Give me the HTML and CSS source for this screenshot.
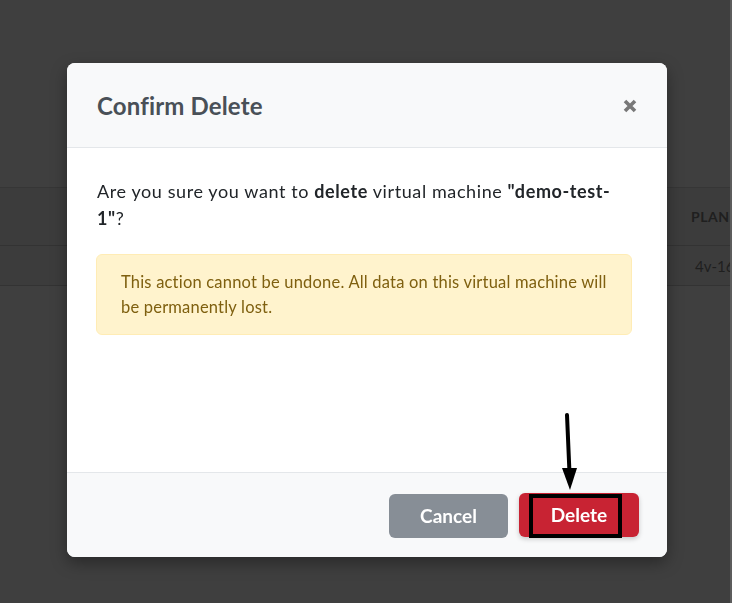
FILE: index.html
```html
<!DOCTYPE html>
<html>
<head>
<meta charset="utf-8">
<link rel="stylesheet" href="styles.css">
</head>
<body>
<div class="page">
  <div class="top-space"></div>
  <div class="row head-row"><div class="spacer"></div><div class="cell th">PLAN</div></div>
  <div class="row data-row"><div class="spacer"></div><div class="cell td">4v-16</div></div>
</div>
<div class="scroll-edge"></div>

<div class="overlay">
  <div class="modal">
    <div class="modal-header">
      <h2 class="modal-title">Confirm Delete</h2>
      <svg class="close" width="14" height="14" viewBox="0 0 14 14" aria-label="Close">
        <path d="M2 2 L12 12 M12 2 L2 12" stroke="#787878" stroke-width="3.6" stroke-linecap="butt"/>
      </svg>
    </div>
    <div class="modal-body">
      <p class="question">Are you sure you want to <b>delete</b> virtual machine <b>"demo-test-<wbr>1"</b>?</p>
      <div class="alert">This action cannot be undone. All data on this virtual machine will be permanently lost.</div>
    </div>
    <div class="modal-footer">
      <button class="btn btn-cancel">Cancel</button>
      <button class="btn btn-delete">Delete<span class="mark"></span></button>
    </div>
  </div>
  <svg class="arrow" width="30" height="80" viewBox="0 0 30 80">
    <line x1="12" y1="2" x2="14.5" y2="60" stroke="#000" stroke-width="4" stroke-linecap="round"/>
    <polygon points="7,55 22,55 15,77" fill="#000"/>
  </svg>
</div>
</body>
</html>
```

FILE: styles.css
```css
html, body {
  margin: 0;
  padding: 0;
  width: 732px;
  height: 603px;
  overflow: hidden;
  background: #3f3f3f;
  font-family: "Lato", "Noto Sans", sans-serif;
}

.page {
  display: flex;
  flex-direction: column;
}

.top-space {
  height: 187px;
  border-bottom: 1px solid #363636;
}

.row {
  display: flex;
  align-items: center;
  background: #3c3c3c;
  border-bottom: 1px solid #333;
}

.head-row { height: 57px; }
.data-row { height: 39px; }

.spacer { width: 691px; flex: none; }

.cell {
  white-space: nowrap;
  color: #1f1f1f;
}

.th {
  font-weight: 700;
  font-size: 14px;
  letter-spacing: 0.5px;
}

.td {
  font-size: 15px;
  padding-left: 4px;
}

.scroll-edge {
  position: fixed;
  top: 0;
  right: 0;
  width: 2px;
  height: 603px;
  background: #5c5c5c;
}

.overlay {
  position: fixed;
  inset: 0;
  display: flex;
  justify-content: center;
  align-items: flex-start;
  padding: 63px 0 0 2px;
}

.modal {
  width: 600px;
  height: 494px;
  background: #fff;
  border-radius: 8px;
  display: flex;
  flex-direction: column;
  overflow: hidden;
  box-shadow: 0 6px 16px rgba(0,0,0,0.35);
}

.modal-header {
  height: 84px;
  background: #f8f9fa;
  border-bottom: 1px solid #e4e7ea;
  display: flex;
  align-items: center;
  justify-content: space-between;
  padding: 0 30px 0 30px;
  flex: none;
}

.modal-title {
  margin: 0;
  font-size: 24px;
  font-weight: 700;
  letter-spacing: 0.15px;
  color: #495057;
}

.close {
  display: block;
  margin-top: 2px;
}

.modal-body {
  flex: 1;
  padding: 30px 35px 0 30px;
}

.question {
  margin: 0 0 22px 0;
  padding-right: 14px;
  font-size: 18px;
  letter-spacing: 0.6px;
  line-height: 27px;
  color: #212529;
}

.question b { font-weight: 700; }

.alert {
  margin-left: -1px;
  background: #fff3cd;
  border: 1px solid #ffecb5;
  border-radius: 6px;
  padding: 15px 12px 14px 24px;
  font-size: 16.5px;
  letter-spacing: 0.2px;
  line-height: 25px;
  color: #7f6010;
}

.modal-footer {
  height: 84px;
  flex: none;
  background: #f8f9fa;
  border-top: 1px solid #e4e7ea;
  display: flex;
  align-items: center;
  justify-content: flex-end;
  gap: 11px;
  padding: 0 28px 0 0;
}

.btn {
  border: none;
  border-radius: 6px;
  height: 44px;
  width: 120px;
  font-family: inherit;
  font-size: 19px;
  font-weight: 700;
  color: #fff;
  position: relative;
}

.btn-cancel {
  background: #878e96;
  width: 119px;
  margin-top: 1px;
}

.btn-delete {
  background: #c82333;
  box-shadow: 0 2px 5px rgba(0,0,0,0.2);
  margin-top: -1px;
}

.mark {
  position: absolute;
  left: 10px;
  top: 1px;
  width: 93px;
  height: 44px;
  box-sizing: border-box;
  border: 4px solid #000;
}

.arrow {
  position: absolute;
  left: 555px;
  top: 413px;
}
```
